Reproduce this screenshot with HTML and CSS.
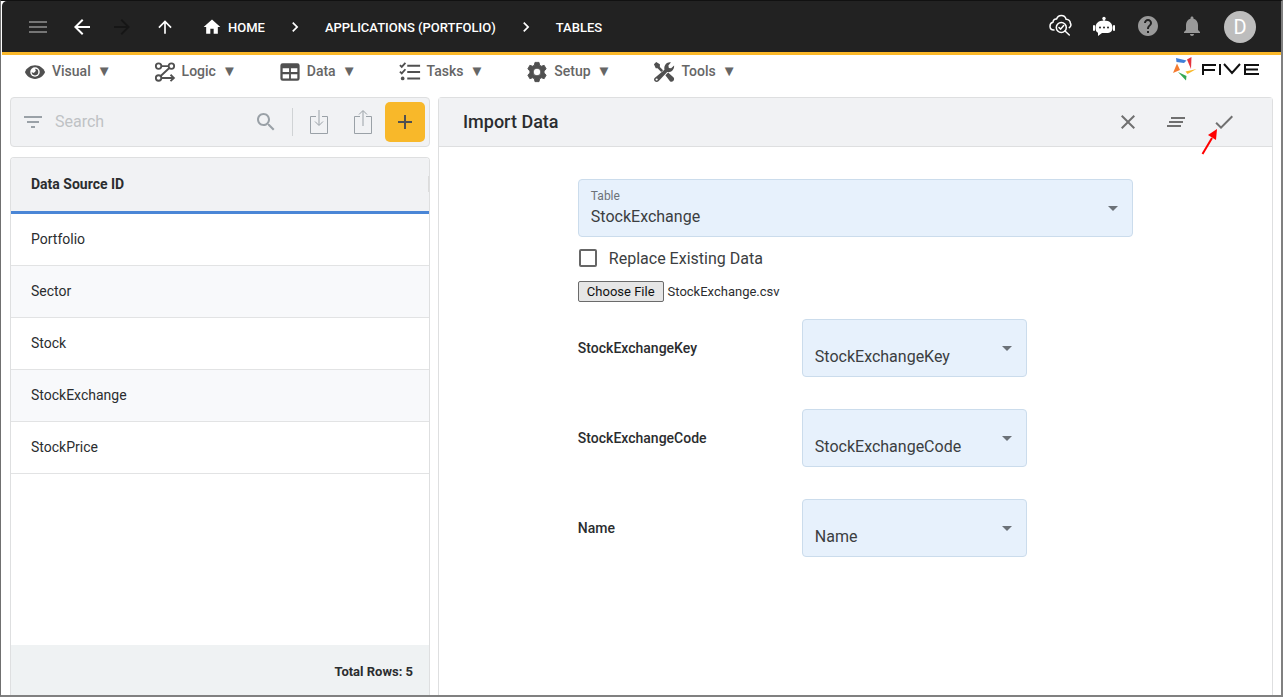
FILE: index.html
```html
<!DOCTYPE html>
<html lang="en">
<head>
<meta charset="utf-8">
<title>Import Data</title>
<link rel="stylesheet" href="styles.css">
</head>
<body>
<div class="frame">
  <header class="topbar">
    <button class="icon-btn dim" aria-label="Menu"><svg class="ic" viewBox="0 0 24 24"><path d="M3 18h18v-2H3v2zm0-5h18v-2H3v2zm0-7v2h18V6H3z"/></svg></button>
    <button class="icon-btn nav" aria-label="Back"><svg class="ic" viewBox="0 0 24 24"><path d="M20 11H7.830l5.590-5.590L12 4l-8 8 8 8 1.410-1.410L7.830 13H20v-2z"/></svg></button>
    <button class="icon-btn nav faint" aria-label="Forward" disabled><svg class="ic" viewBox="0 0 24 24"><path d="M12 4l-1.410 1.410L16.170 11H4v2h12.170l-5.580 5.590L12 20l8-8z"/></svg></button>
    <button class="icon-btn nav" aria-label="Up"><svg class="ic small" viewBox="0 0 24 24"><path d="M4 12l1.410 1.410L11 7.830V20h2V7.830l5.580 5.590L20 12l-8-8-8 8z"/></svg></button>
    <nav class="crumbs" aria-label="Breadcrumb">
      <a href="#" class="crumb"><svg class="ic small" viewBox="0 0 24 24"><path d="M10 20v-6h4v6h5v-8h3L12 3 2 12h3v8z"/></svg>HOME</a>
      <svg class="ic chevron" viewBox="0 0 24 24"><path d="M10 6L8.590 7.410 13.170 12l-4.580 4.590L10 18l6-6z"/></svg>
      <a href="#" class="crumb">APPLICATIONS (PORTFOLIO)</a>
      <svg class="ic chevron" viewBox="0 0 24 24"><path d="M10 6L8.590 7.410 13.170 12l-4.580 4.590L10 18l6-6z"/></svg>
      <a href="#" class="crumb">TABLES</a>
    </nav>
    <div class="tools">
      <button class="icon-btn" aria-label="Inspect"><svg class="ic" viewBox="0 0 24 24"><g fill="none" stroke="currentColor" stroke-width="1.500" stroke-linecap="round" stroke-linejoin="round"><path d="M6 16C3.500 16 2 14.300 2 12.200c0-2 1.200-3.500 3-3.900C5 5.800 6.800 4.600 8.600 5 9.400 2.600 11.300 1.500 13.300 1.500c2.600 0 4.200 1.500 4.800 3.800 2.800.1 4.300 1.700 4.200 3.700 1.100 1.500.8 3.500-1 4.700"/><circle cx="13.300" cy="13.500" r="5"/><path d="M17 17l4.300 4M11 13.500l1.700 1.600 3-3.500"/></g></svg></button>
      <button class="icon-btn" aria-label="Assistant"><svg class="ic" viewBox="0 0 24 24"><circle cx="12" cy="4.500" r="1.700"/><path d="M11.400 5h1.200v4h-1.200z"/><path d="M12 6.500c5.500 0 8.500 2.800 8.500 7.300 0 3-1.700 5.200-4.500 5.200h-6L6 22v-3.200c-1.700-.7-2.500-2.600-2.500-5 0-4.500 3-7.300 8.500-7.300z"/><rect x="1" y="11" width="2" height="6" rx="1"/><rect x="21" y="11" width="2" height="6" rx="1"/><g fill="#222"><circle cx="8" cy="13.500" r="1"/><circle cx="12" cy="13.500" r="1"/><circle cx="16" cy="13.500" r="1"/></g></svg></button>
      <button class="icon-btn gray" aria-label="Help"><svg class="ic" viewBox="0 0 24 24"><path d="M12 2C6.480 2 2 6.480 2 12s4.480 10 10 10 10-4.480 10-10S17.520 2 12 2zm1 17h-2v-2h2v2zm2.070-7.750l-.9.920C13.450 12.900 13 13.500 13 15h-2v-.5c0-1.100.450-2.100 1.170-2.830l1.240-1.260c.370-.360.590-.860.590-1.410 0-1.100-.9-2-2-2s-2 .9-2 2H8c0-2.210 1.790-4 4-4s4 1.790 4 4c0 .880-.360 1.680-.930 2.250z"/></svg></button>
      <button class="icon-btn gray" aria-label="Notifications"><svg class="ic" viewBox="0 0 24 24"><path d="M12 22c1.100 0 2-.9 2-2h-4c0 1.100.890 2 2 2zm6-6v-5c0-3.070-1.640-5.640-4.500-6.320V4c0-.830-.670-1.500-1.500-1.500s-1.500.670-1.500 1.500v.680C7.630 5.360 6 7.920 6 11v5l-2 2v1h16v-1l-2-2z"/></svg></button>
      <button class="avatar">D</button>
    </div>
  </header>

  <nav class="menubar" aria-label="Main">
    <button class="menu"><svg class="ic" viewBox="0 0 24 24"><path d="M12 4.500C7 4.500 2.730 7.610 1 12c1.730 4.390 6 7.500 11 7.500s9.270-3.110 11-7.500c-1.730-4.390-6-7.500-11-7.500z"/><circle cx="12" cy="12" r="5.200" fill="#fff"/><path d="M12 8.500a3.600 3.600 0 1 1-3.600 3.600A2 2 0 0 0 12 8.500z"/></svg>Visual<span class="tri">▼</span></button>
    <button class="menu"><svg class="ic" viewBox="0 0 24 24"><g fill="none" stroke="currentColor" stroke-width="2"><circle cx="5" cy="5.500" r="3"/><circle cx="19" cy="5.500" r="3"/><circle cx="5" cy="18.500" r="3"/><path d="M8 5.500h8M16.700 7.600L7.300 16.400M8 18.500h13M18 15l3.700 3.500L18 22"/></g></svg>Logic<span class="tri">▼</span></button>
    <button class="menu"><svg class="ic" viewBox="0 0 24 24"><path fill-rule="evenodd" d="M4 2.500h16a2.500 2.500 0 0 1 2.500 2.500v14a2.500 2.500 0 0 1-2.500 2.500H4A2.500 2.500 0 0 1 1.500 19V5A2.500 2.500 0 0 1 4 2.500zM4 8v4h7V8zm9 0v4h7V8zM4 14.500V19h7v-4.500zm9 0V19h7v-4.500z"/></svg>Data<span class="tri">▼</span></button>
    <button class="menu"><svg class="ic" viewBox="0 0 24 24"><path d="M9 4h14v2.200H9zM9 11h14v2.200H9zM9 18h14v2.200H9z"/><circle cx="4" cy="19" r="2"/><path d="M1 4.500l2 2 4-4.500M1 11.500l2 2L7 9" fill="none" stroke="currentColor" stroke-width="2"/></svg>Tasks<span class="tri">▼</span></button>
    <button class="menu"><svg class="ic" viewBox="0 0 24 24"><path fill-rule="evenodd" stroke="currentColor" stroke-linejoin="round" d="M9.800 1.500h4.400l.7 3.100 1.900 1.100 3-1L22 8.700l-2.300 2.200v2.200l2.300 2.200-2.200 4-3-1-1.900 1.100-.7 3.100H9.800l-.7-3.100-1.900-1.100-3 1-2.200-4 2.300-2.200v-2.200L2 8.700l2.200-4 3 1 1.900-1.100zM12 7.800a4.200 4.200 0 1 0 0 8.400 4.200 4.200 0 0 0 0-8.400z"/></svg>Setup<span class="tri">▼</span></button>
    <button class="menu"><svg class="ic" viewBox="0 0 24 24"><path d="M1 3.500L3.500 1 7.500 3.500v3L11 10l-2 2-4-4H3zM13.500 15.500l3-3 6 5.500c1.800 2.500-1.500 6-4 4z"/><path fill-rule="evenodd" d="M1.800 18.500L12.500 9.500C11.500 5 15 .5 19.500 1.500L16.800 5l.5 2.500 2.500.5L23 5c.5 4.500-3.500 8-7.500 7L6 22c-2.500 2.500-6.500-1-4.200-3.500zM4 19a1.200 1.200 0 1 0 0 2.400A1.200 1.200 0 0 0 4 19z"/></svg>Tools<span class="tri">▼</span></button>
    <svg class="logo" viewBox="0 0 88 24" role="img" aria-label="Five">
      <path fill="#3f7fd9" d="M4 1l10.500 2.500L12 6 4.500 5z"/><path fill="#e5343d" d="M19.500 0l-.5 12-4-9.500z"/><path fill="#f8b82a" d="M24.500 12l-9 5-2-2.500z"/><path fill="#34a853" d="M6 15l8.500 4-.5 4.500z"/><path fill="#f47b30" d="M5 6.500l3 6.500-7 3z"/>
      <path fill="none" stroke="#111" stroke-width="2" d="M44 8H31v10M31 13h12M48 7v11M52 7l8 9 8-9M87 8H73v9h14M73 12.500h13"/>
    </svg>
  </nav>

  <main class="content">
    <section class="side">
      <div class="searchbar">
        <button class="icon-btn muted" aria-label="Filter"><svg class="ic" viewBox="0 0 24 24"><path d="M10 18h4v-2h-4v2zM3 6v2h18V6H3zm3 7h12v-2H6v2z"/></svg></button>
        <input class="search" type="search" placeholder="Search" aria-label="Search">
        <button class="icon-btn muted" aria-label="Find"><svg class="ic" viewBox="0 0 24 24"><path d="M15.500 14h-.790l-.280-.270C15.410 12.590 16 11.110 16 9.500 16 5.910 13.090 3 9.500 3S3 5.910 3 9.500 5.910 16 9.500 16c1.610 0 3.090-.590 4.230-1.570l.270.280v.790l5 4.990L20.490 19l-4.990-5zm-6 0C7.010 14 5 11.990 5 9.500S7.010 5 9.500 5 14 7.010 14 9.500 11.990 14 9.500 14z"/></svg></button>
        <span class="divider"></span>
        <button class="icon-btn muted" aria-label="Import"><svg class="ic tall" viewBox="0 0 20 26" fill="none" stroke="currentColor"><path d="M7 7.500H1.500v17h17v-17H13"/><path d="M10 1v15M6 12.500l4 4 4-4"/></svg></button>
        <button class="icon-btn muted export" aria-label="Export"><svg class="ic tall" viewBox="0 0 20 26" fill="none" stroke="currentColor"><path d="M7 7.500H1.500v17h17v-17H13"/><path d="M10 17V2M6 5.500l4-4 4 4"/></svg></button>
        <button class="add" aria-label="Add"><svg class="ic" viewBox="0 0 24 24"><path d="M19 13h-6v6h-2v-6H5v-2h6V5h2v6h6v2z"/></svg></button>
      </div>
      <div class="list">
        <table class="grid">
          <thead><tr><th scope="col"><span class="head">Data Source ID</span></th></tr></thead>
          <tbody>
            <tr><td>Portfolio</td></tr>
            <tr><td>Sector</td></tr>
            <tr><td>Stock</td></tr>
            <tr><td>StockExchange</td></tr>
            <tr><td>StockPrice</td></tr>
          </tbody>
        </table>
        <footer class="total">Total Rows: 5</footer>
      </div>
    </section>

    <section class="panel">
      <div class="panel-head">
        <h1 class="title">Import Data</h1>
        <button class="icon-btn" aria-label="Cancel"><svg class="ic" viewBox="0 0 24 24"><path d="M19 6.410L17.590 5 12 10.590 6.410 5 5 6.410 10.590 12 5 17.590 6.410 19 12 13.410 17.590 19 19 17.590 13.410 12z"/></svg></button>
        <button class="icon-btn" aria-label="Clear"><svg class="ic" viewBox="0 0 24 24"><path d="M5 13h14v-2H5v2zm-2 4h14v-2H3v2zM7 7v2h14V7H7z"/></svg></button>
        <div class="confirm">
          <button class="icon-btn" aria-label="Save"><svg class="ic" viewBox="0 0 24 24"><path d="M9 16.170L4.830 12l-1.420 1.410L9 19 21 7l-1.410-1.410z"/></svg></button>
          <svg class="pointer" viewBox="0 0 18 26"><path d="M1.500 25L11 9" stroke="#f00" stroke-width="2"/><path d="M16 0l-1 11-8-5z" fill="#f00"/></svg>
        </div>
      </div>
      <form class="form">
        <div class="field">
          <label class="caption" for="table">Table</label>
          <select id="table"><option>StockExchange</option></select>
          <svg class="caret" viewBox="0 0 10 5"><path d="M0 0h10L5 5z"/></svg>
        </div>
        <label class="check"><input type="checkbox">Replace Existing Data</label>
        <div class="file"><button type="button" class="choose">Choose File</button><span>StockExchange.csv</span></div>
        <div class="map">
          <label for="m1">StockExchangeKey</label>
          <div class="field"><select id="m1"><option>StockExchangeKey</option></select><svg class="caret" viewBox="0 0 10 5"><path d="M0 0h10L5 5z"/></svg></div>
          <label for="m2">StockExchangeCode</label>
          <div class="field"><select id="m2"><option>StockExchangeCode</option></select><svg class="caret" viewBox="0 0 10 5"><path d="M0 0h10L5 5z"/></svg></div>
          <label for="m3">Name</label>
          <div class="field"><select id="m3"><option>Name</option></select><svg class="caret" viewBox="0 0 10 5"><path d="M0 0h10L5 5z"/></svg></div>
        </div>
      </form>
    </section>
  </main>
</div>
</body>
</html>
```

FILE: styles.css
```css
* { box-sizing: border-box; }
body { margin: 0; font-family: Roboto, "Liberation Sans", sans-serif; font-size: 14px; color: #2b2d2f; background: #fff; }
button { font: inherit; color: inherit; background: none; border: 0; padding: 0; }
.frame { height: 100vh; display: flex; flex-direction: column; overflow: hidden; border: 2px solid #808080; border-top: 1px solid #111; border-left: 1px solid #707070; padding-left: 1px; }
.ic { width: 24px; height: 24px; fill: currentColor; display: block; flex: none; }
.ic.small { width: 20px; height: 20px; }
svg.ic[fill="none"] { fill: none; }
.icon-btn { display: flex; align-items: center; justify-content: center; flex: none; }

.topbar { display: flex; align-items: center; height: 54px; flex: none; background: #222; border-bottom: 3px solid #fbb829; color: #fff; padding: 1px 25px 0 24px; border-top-left-radius: 5px; }
.dim { color: #757575; }
.nav { margin-left: 20px; }
.nav + .nav { margin-left: 17px; }
.nav + .nav.faint { margin-left: 16px; }
.nav + .nav:not(.faint) { margin-left: 21px; }
.faint { color: #161616; }
.crumbs { display: flex; align-items: center; flex: 1; margin-left: 27px; }
.crumb { display: flex; align-items: center; gap: 6px; font-size: 13px; font-weight: 500; color: #fff; text-decoration: none; }
.chevron { width: 20px; height: 20px; margin: 0 20px; }
.tools { display: flex; align-items: center; gap: 20px; }
.tools .icon-btn { margin-bottom: 3px; }
.gray { color: #999; }
.avatar { width: 32px; height: 32px; border-radius: 50%; background: #bdbdbd; color: #fff; font-size: 20px; }

.menubar { display: flex; align-items: center; height: 42px; flex: none; padding: 0 21px 10px 22px; gap: 42px; }
.menu { display: flex; align-items: center; gap: 6px; font-size: 14px; font-weight: 500; line-height: 20px; color: #666; white-space: nowrap; }
.menu .ic { width: 22px; height: 22px; color: #505050; margin-top: 2px; }
.tri { font-size: 15px; }
.logo { width: 88px; height: 24px; margin-left: auto; margin-bottom: 4px; flex: none; }

.content { display: flex; gap: 8px; flex: 1; min-height: 0; padding: 0 8px; }
.side { width: 420px; flex: none; display: flex; flex-direction: column; gap: 10px; }
.searchbar { display: flex; align-items: center; height: 50px; flex: none; background: #f1f2f4; border: 1px solid #dedfe0; border-radius: 4px; padding: 0 4px 0 10px; }
.muted { color: #9aa1a7; }
.search { flex: 1; min-width: 0; border: 0; background: none; padding: 0 0 2px; margin-left: 10px; font: inherit; font-size: 16px; color: inherit; outline: 0; }
.search::placeholder { color: #bfc2c5; opacity: 1; }
.divider { width: 1px; height: 28px; margin: 0 16px 0 14px; background: #d0d3d5; }
.ic.tall { width: 20px; height: 26px; }
.export { margin: 0 12px 0 24px; }
.add { display: flex; align-items: center; justify-content: center; width: 40px; height: 40px; flex: none; border-radius: 5px; background: #f8b82a; color: #505050; }

.list { flex: 1; min-height: 0; display: flex; flex-direction: column; justify-content: space-between; border: 1px solid #dedfe0; border-bottom: 0; border-radius: 4px 4px 0 0; overflow: hidden; }
.grid { width: 100%; border-collapse: separate; border-spacing: 0; }
.grid th { height: 56px; padding: 0 0 2px; text-align: left; font-weight: 700; background: #f1f2f4; border-bottom: 3px solid #4a86d6; }
.head { display: block; padding-left: 20px; border-right: 1px solid #dcdcdc; }
.grid td { height: 52px; padding: 0 20px 2px; border-bottom: 1px solid #e2e3e4; }
.grid tbody tr:nth-child(even) { background: #f8f9fb; }
.total { height: 50px; flex: none; padding: 0 16px; line-height: 54px; text-align: right; font-size: 13px; font-weight: 700; background: #eff2f3; }

.panel { flex: 1; min-width: 0; border: 1px solid #dedfe0; border-bottom: 0; border-radius: 4px 4px 0 0; }
.panel-head { display: flex; align-items: center; gap: 24px; height: 49px; padding: 0 36px 0 24px; background: #f1f2f4; border-bottom: 1px solid #dedfe0; color: #707070; }
.title { flex: 1; margin: 0; padding-bottom: 2px; font-size: 18px; font-weight: 500; color: #2b2d2f; }
.confirm { position: relative; }
.pointer { position: absolute; left: -11px; top: 19px; width: 18px; height: 26px; }

.form { width: 66.66%; margin: 32px auto 0; }
.field { position: relative; }
.field select { display: block; width: 100%; height: 58px; appearance: none; border: 1px solid #cbdcec; border-radius: 4px; background: #e7f1fc; padding: 16px 40px 0 12px; font: inherit; font-size: 16px; color: #3b3e41; }
.caption { position: absolute; left: 13px; top: 9px; font-size: 12px; line-height: 16px; color: #6c7278; }
.caret { position: absolute; right: 15px; top: 27px; width: 10px; height: 5px; fill: #6c7278; }
.check { display: flex; align-items: center; gap: 12px; height: 42px; padding-left: 1px; font-size: 16px; color: #3b3e41; }
.check input { appearance: none; width: 18px; height: 18px; margin: 0; border: 2px solid #666; border-radius: 2px; background: #fff; }
.file { display: flex; align-items: center; gap: 4px; height: 22px; margin-top: 1px; font-size: 13px; }
.choose { height: 21px; padding: 0 8px; border: 1px solid #6b6b6b; border-radius: 2px; background: #e6e6e6; color: #111; }
.map { display: grid; grid-template-columns: 224px 225px; align-items: center; row-gap: 32px; margin-top: 17px; font-weight: 500; }
.map .field { font-weight: 400; }
```
